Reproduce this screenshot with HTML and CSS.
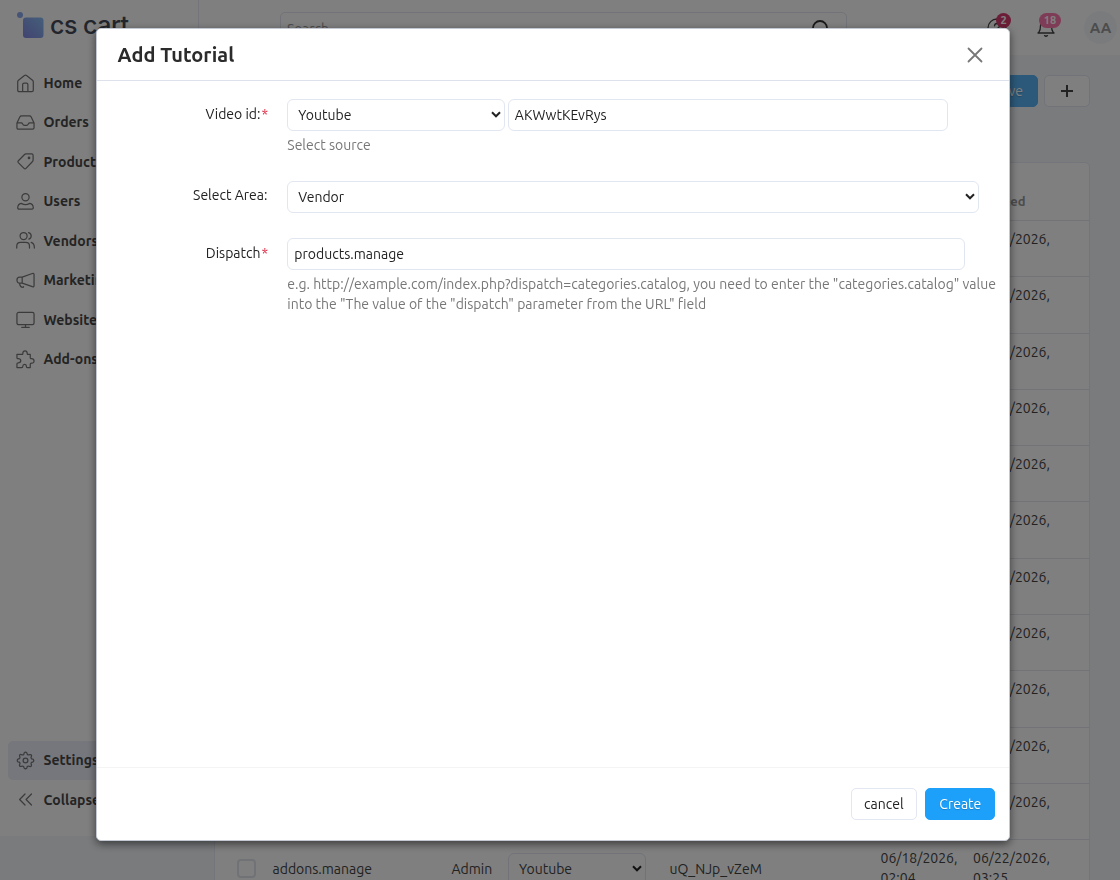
FILE: index.html
```html
<!DOCTYPE html>
<html lang="en">
<head>
<meta charset="utf-8">
<title>Add Tutorial</title>
<link rel="stylesheet" href="styles.css">
</head>
<body>
<div class="app">
  <aside class="sidebar">
    <div class="logo">
      <svg width="28" height="28" viewBox="0 0 28 28"><defs><linearGradient id="lg" x1="1" y1="0" x2="0" y2="1"><stop offset="0" stop-color="#8abef5"/><stop offset="1" stop-color="#8488e2"/></linearGradient></defs><circle cx="3" cy="4" r="3" fill="#8aa8ee"/><rect x="6" y="6.500" width="20.500" height="20.500" rx="3" fill="url(#lg)"/></svg>
      <span class="logo-text">cs cart</span>
    </div>
    <nav class="menu">
      <a class="item"><svg class="ic" viewBox="0 0 20 20"><path d="M1.800 8.200Q1.800 7.300 2.600 6.600L8.900 1.600Q10 .8 11.100 1.600L17.400 6.600Q18.200 7.300 18.200 8.200V17Q18.200 18.500 16.700 18.500H3.300Q1.800 18.500 1.800 17ZM7 18.500V11Q7 9.500 8.500 9.500H11Q12.500 9.500 12.500 11V18.500"/></svg><span>Home</span></a>
      <a class="item"><svg class="ic" viewBox="0 0 20 20"><path d="M1 10.500L4 4.200Q4.600 3 6 3H14Q15.400 3 16 4.200L19 10.500V15.500Q19 17 17.500 17H2.500Q1 17 1 15.500ZM1 10.500H5.500Q6.500 10.500 7 11.500Q7.500 13 9 13H11Q12.500 13 13 11.500Q13.500 10.500 14.500 10.500H19"/></svg><span>Orders</span></a>
      <a class="item"><svg class="ic" viewBox="0 0 20 20"><path d="M10.500 2H16.500Q18 2 18 3.500V8.500Q18 9.300 17.400 10L10.500 17.200Q9.500 18.200 8.500 17.200L2.400 11.200Q1.500 10.200 2.500 9.200L9 2.600Q9.600 2 10.500 2Z"/><circle cx="13.700" cy="6.300" r=".8"/></svg><span>Products</span></a>
      <a class="item"><svg class="ic" viewBox="0 0 20 20"><circle cx="10" cy="5.500" r="3.800"/><path d="M1.800 16.500Q2 12.500 5.500 12Q8 13.400 10 13.400Q12 13.400 14.500 12Q18 12.500 18.200 16.500Q18.200 18 16.800 18H3.200Q1.800 18 1.800 16.500Z"/></svg><span>Users</span></a>
      <a class="item"><svg class="ic" viewBox="0 0 20 20"><circle cx="8" cy="5.300" r="3.700"/><path d="M.8 18V16Q.8 12 4.800 12H10.200Q14.200 12 14.200 16V18M13.200 1.800Q16 2.600 16 5.300Q16 7.800 13.500 8.600M16 12Q19.300 13.200 19.300 17V18"/></svg><span>Vendors</span></a>
      <a class="item"><svg class="ic" viewBox="0 0 20 20"><path d="M6.500 6.500L17.200 2.600Q19 2 19 3.800V15.300Q19 17 17.200 16.500L6.500 12.800H4Q1 12.800 1 9.600Q1 6.500 4 6.500ZM6.500 6.500V12.800M3.800 13Q4.200 17.200 7.500 17.300L8 16.500"/></svg><span>Marketing</span></a>
      <a class="item"><svg class="ic" viewBox="0 0 20 20"><rect x="1" y="2.500" width="18" height="13" rx="1.800"/><path d="M10 15.500V18.200M6 18.200H14"/></svg><span>Website</span></a>
      <a class="item"><svg class="ic" viewBox="0 0 20 20"><path d="M5.300 4.700H6.500Q7.300 4.700 7.200 3.500Q7.300 1 9.500 1Q11.700 1 11.800 3.500Q11.700 4.700 12.600 4.700H15V8Q15 9.300 16.300 9Q19 9 19 11.500Q19 14 16.300 13.700Q15 13.700 15 15V18.500H11.800Q10.800 18.500 11 17.200Q10.800 15.200 9 15.200Q7.200 15.200 7.200 17.200Q7.200 18.500 6 18.500H1V14.500Q1 13.500 2.200 13.500Q5 13.400 5 11.300Q5 9.200 2.200 9.200Q1 9.200 1 8V4.700Z"/></svg><span>Add-ons</span></a>
    </nav>
    <nav class="menu bottom">
      <a class="item active"><svg class="ic" viewBox="0 0 20 20"><circle cx="10" cy="10" r="2.500"/><path d="M8.600 2Q10 .6 11.400 2L12 3.600Q13 4.500 14.200 3.900Q16.600 3.200 16.300 5.600Q15.300 7 16.400 8.200L18 8.600Q19.400 10 18 11.400L16.400 12Q15.500 13 16.100 14.200Q16.800 16.600 14.400 16.300Q13 15.300 11.800 16.400L11.400 18Q10 19.400 8.600 18L8 16.400Q7 15.500 5.800 16.100Q3.400 16.800 3.700 14.400Q4.700 13 3.600 11.800L2 11.400Q.6 10 2 8.600L3.600 8Q4.500 7 3.900 5.800Q3.200 3.400 5.600 3.700Q7 4.700 8.200 3.600Z"/></svg><span>Settings</span></a>
      <a class="item"><svg class="ic" viewBox="0 0 20 20"><path d="M9.500 4.200L3.800 10L9.500 15.800M16.300 4.200L10.600 10L16.300 15.800"/></svg><span>Collapse</span></a>
    </nav>
  </aside>
  <div class="page">
    <header class="topbar">
      <div class="search"><span>Search</span><svg width="20" height="20" viewBox="0 0 20 20"><circle cx="9" cy="9" r="7"/><path d="M14 14L19 19"/></svg></div>
      <div class="help"><svg width="22" height="22" viewBox="0 0 22 22"><circle cx="11" cy="11" r="9"/><path d="M8.500 8.800Q8.700 6.500 11 6.500Q13.500 6.500 13.500 8.800Q13.500 10.500 11 11.800V13M11 15V16"/></svg><b class="badge red">2</b></div>
      <div class="bell"><svg width="20" height="20" viewBox="0 0 20 20"><path d="M3 15Q4.500 13 4.500 8.500Q4.500 3 10 3Q15.500 3 15.500 8.500Q15.500 13 17 15L18 16H2ZM8.500 18.600Q10 20 11.500 18.600"/></svg><b class="badge pink">18</b></div>
      <div class="avatar">AA</div>
    </header>
    <div class="actions"><span class="btn primary save">Save</span><span class="btn add"><svg width="14" height="14" viewBox="0 0 14 14"><path d="M7 1V13M1 7H13"/></svg></span></div>
    <div class="table">
      <div class="row head"><span></span><span></span><span></span><span></span><span></span><span></span><span>Updated</span></div>
      <div class="row"><span></span><span></span><span></span><span></span><span></span><span></span><span>06/22/2026,</span></div>
      <div class="row"><span></span><span></span><span></span><span></span><span></span><span></span><span>06/22/2026,</span></div>
      <div class="row"><span></span><span></span><span></span><span></span><span></span><span></span><span>06/22/2026,</span></div>
      <div class="row"><span></span><span></span><span></span><span></span><span></span><span></span><span>06/22/2026,</span></div>
      <div class="row"><span></span><span></span><span></span><span></span><span></span><span></span><span>06/22/2026,</span></div>
      <div class="row"><span></span><span></span><span></span><span></span><span></span><span></span><span>06/22/2026,</span></div>
      <div class="row"><span></span><span></span><span></span><span></span><span></span><span></span><span>06/22/2026,</span></div>
      <div class="row"><span></span><span></span><span></span><span></span><span></span><span></span><span>06/22/2026,</span></div>
      <div class="row"><span></span><span></span><span></span><span></span><span></span><span></span><span>06/22/2026,</span></div>
      <div class="row"><span></span><span></span><span></span><span></span><span></span><span></span><span>06/22/2026,</span></div>
      <div class="row"><span></span><span></span><span></span><span></span><span></span><span></span><span>06/22/2026,</span></div>
      <div class="row last"><span class="mid"><i class="check"></i></span><span class="mid"><em>addons.manage</em></span><span class="mid"><em>Admin</em></span><span class="mid"><span class="select small"><em>Youtube</em><svg class="chev" viewBox="0 0 10 7"><path d="M1 1.300L5 5.300L9 1.300"/></svg></span></span><span class="mid"><em>uQ_NJp_vZeM</em></span><span>06/18/2026,<br>02:04</span><span>06/22/2026,<br>03:25</span></div>
    </div>
  </div>
</div>
<div class="backdrop"></div>
<div class="modal">
  <div class="modal-head"><h3>Add Tutorial</h3><svg width="16" height="16" viewBox="0 0 16 16"><path d="M1.500 1.500L14.500 14.500M14.500 1.500L1.500 14.500"/></svg></div>
  <div class="modal-body">
    <div class="field">
      <label><em>Video id:</em><b>*</b></label>
      <div class="control">
        <div class="line"><span class="select source"><em>Youtube</em><svg class="chev" viewBox="0 0 10 7"><path d="M1 1.300L5 5.300L9 1.300"/></svg></span><span class="input video"><em>AKWwtKEvRys</em></span></div>
        <p class="hint"><em>Select source</em></p>
      </div>
    </div>
    <div class="field area">
      <label><em>Select Area:</em></label>
      <div class="control"><span class="select wide"><em>Vendor</em><svg class="chev" viewBox="0 0 10 7"><path d="M1 1.300L5 5.300L9 1.300"/></svg></span></div>
    </div>
    <div class="field dispatch">
      <label><em>Dispatch</em><b>*</b></label>
      <div class="control">
        <span class="input long"><em>products.manage</em></span>
        <p class="hint"><em>e.g. http://example.com/index.php?dispatch=categories.catalog, you need to enter the "categories.catalog" value</em><br><em>into the "The value of the "dispatch" parameter from the URL" field</em></p>
      </div>
    </div>
  </div>
  <div class="modal-foot"><span class="btn cancel">cancel</span><span class="btn primary create">Create</span></div>
</div>
</body>
</html>
```
FILE: styles.css
```css
* { box-sizing: border-box; }
html, body { margin: 0; height: 880px; overflow: hidden; }
body { font: 14px/20px Ubuntu, "Noto Sans", sans-serif; color: #222; background: #f4f7fb; }
em { font-style: normal; white-space: nowrap; }
svg { fill: none; stroke: #555; stroke-width: 1.3; stroke-linecap: round; stroke-linejoin: round; flex: none; }
.app { display: flex; height: 880px; overflow: hidden; }
.sidebar { width: 198px; height: 836px; background: #fff; display: flex; flex-direction: column; padding: 0 8px 16.500px; flex: none; }
.logo { height: 63.300px; padding: 11px 0 0 9px; display: flex; align-items: flex-start; gap: 5px; }
.logo svg { stroke: none; }
.logo-text { font: 500 25px/29px Inter, sans-serif; color: #474b59; letter-spacing: -.5px; white-space: nowrap; }
.menu { display: flex; flex-direction: column; }
.menu.bottom { margin-top: auto; }
.item { height: 39.450px; display: flex; align-items: center; gap: 8.500px; padding-left: 8px; border-radius: 5px; font-weight: 700; color: #484848; }
.item.active { background: #ebeef8; }
.ic { width: 19px; height: 19px; stroke: #777; }
.page { flex: 1; min-width: 0; }
.topbar { height: 55px; background: #fff; border-left: 1px solid #e9ebf8; display: flex; align-items: flex-start; }
.search { width: 567px; height: 33px; margin: 12px 0 0 81px; border: 1px solid #e2e7f0; border-radius: 5px; padding: 6px 15px 0 6px; display: flex; justify-content: space-between; flex: none; color: #999; }
.search svg { stroke: #333; stroke-width: 1.800; }
.help, .bell { position: relative; flex: none; }
.help { margin: 17px 0 0 139px; width: 22px; }
.bell { margin: 17px 0 0 28px; width: 20px; }
.bell svg, .help svg { stroke: #444; }
.badge { position: absolute; height: 15px; border-radius: 8px; color: #fff; font: 700 11px/15px Ubuntu, "Noto Sans", sans-serif; text-align: center; }
.red { left: 10px; top: -4px; width: 15px; background: #d83b70; }
.pink { left: 3px; top: -4px; width: 22px; background: #ff78ac; }
.avatar { width: 33px; height: 33px; margin: 11px 0 0 28px; border-radius: 50%; background: #f4f7fb; color: #999; font: 700 15px/34px Ubuntu, "Noto Sans", sans-serif; text-align: center; flex: none; }
.actions { display: flex; justify-content: flex-end; gap: 6px; padding: 20px 30.500px 0 0; height: 107px; }
.btn { height: 32px; border-radius: 5px; border: 1px solid #e3e7f2; background: #fff; display: flex; align-items: center; justify-content: center; }
.primary { background: #1da0fa; border-color: #1da0fa; color: #fff; text-shadow: 0 1px 1px #0003; }
.save { width: 59px; background: #58b2f4; border-color: #58b2f4; margin-right: -.5px; }
.add { width: 46px; }
.add svg { stroke: #444; stroke-width: 2; stroke-linecap: butt; }
.table { width: 876px; margin-left: 16px; background: #fff; border: 1px solid #e7ebf4; border-radius: 5px; color: #444; }
.row { height: 56.300px; padding: 8px 0 0 16px; display: grid; grid-template-columns: 41.500px 179px 57px 161px 211px 92.500px 117px; border-bottom: 1px solid #e3e6ed; white-space: nowrap; }
.row > span { line-height: 20px; }
.head { padding-top: 28px; height: 58px; font-size: 13px; font-weight: 700; color: #999; }
.last { height: 58px; border: 0; }
.mid { height: 40.500px; display: flex; align-items: center; }
.check { width: 19px; height: 19px; margin-left: 6px; border: 2px solid #e0e5ec; border-radius: 4px; }
.select, .input { height: 32px; border: 1px solid #e2e6f0; border-radius: 6px; display: flex; align-items: center; background: #fff; flex: none; }
.select { justify-content: space-between; padding: 0 3px 0 10px; }
.input { padding: 0 6px; }
.chev { width: 10px; height: 7px; stroke: #222; stroke-width: 2; stroke-linecap: butt; stroke-linejoin: miter; }
.small { width: 138px; margin-left: -.5px; }
.backdrop { position: fixed; inset: 0; background: rgba(0,0,0,.5); }
.modal { position: fixed; left: 95.500px; top: 28px; width: 914.500px; height: 812.500px; border: 1px solid #c4c8d2; border-radius: 5px; background: #fff; box-shadow: 0 3px 8px #0008; display: flex; flex-direction: column; }
.modal-head { height: 52px; border-bottom: 1px solid #dce1eb; padding: 0 26px 0 21px; display: flex; align-items: center; justify-content: space-between; flex: none; }
h3 { margin: 0; font-size: 20px; line-height: 28px; color: #2b2b2b; letter-spacing: .05px; }
.modal-head svg { stroke: #777; stroke-width: 1.800; }
.modal-body { flex: 1; padding: 17.500px 0 0 0; }
.field { display: flex; gap: 19.800px; height: 82px; }
.field label { width: 171px; display: flex; justify-content: flex-end; padding-top: 5px; height: 30px; line-height: 20px; }
.field label b { color: #e0324b; font-weight: 400; margin-left: 1px; width: 6px; }
.line { display: flex; gap: 3px; }
.source { width: 217.500px; }
.video { width: 440px; }
.wide { width: 691.500px; }
.long { width: 677.500px; }
.field.area { height: 57.500px; }
.field.area label { padding-top: 4px; }
.hint { margin: 4px 0 0; color: #777; line-height: 20px; }
.modal-foot { height: 72.500px; border-top: 1px solid #f4f4f4; display: flex; justify-content: flex-end; gap: 8.500px; padding: 20px 13.700px 0 0; flex: none; }
.cancel { width: 66px; }
.create { width: 70px; }
```
